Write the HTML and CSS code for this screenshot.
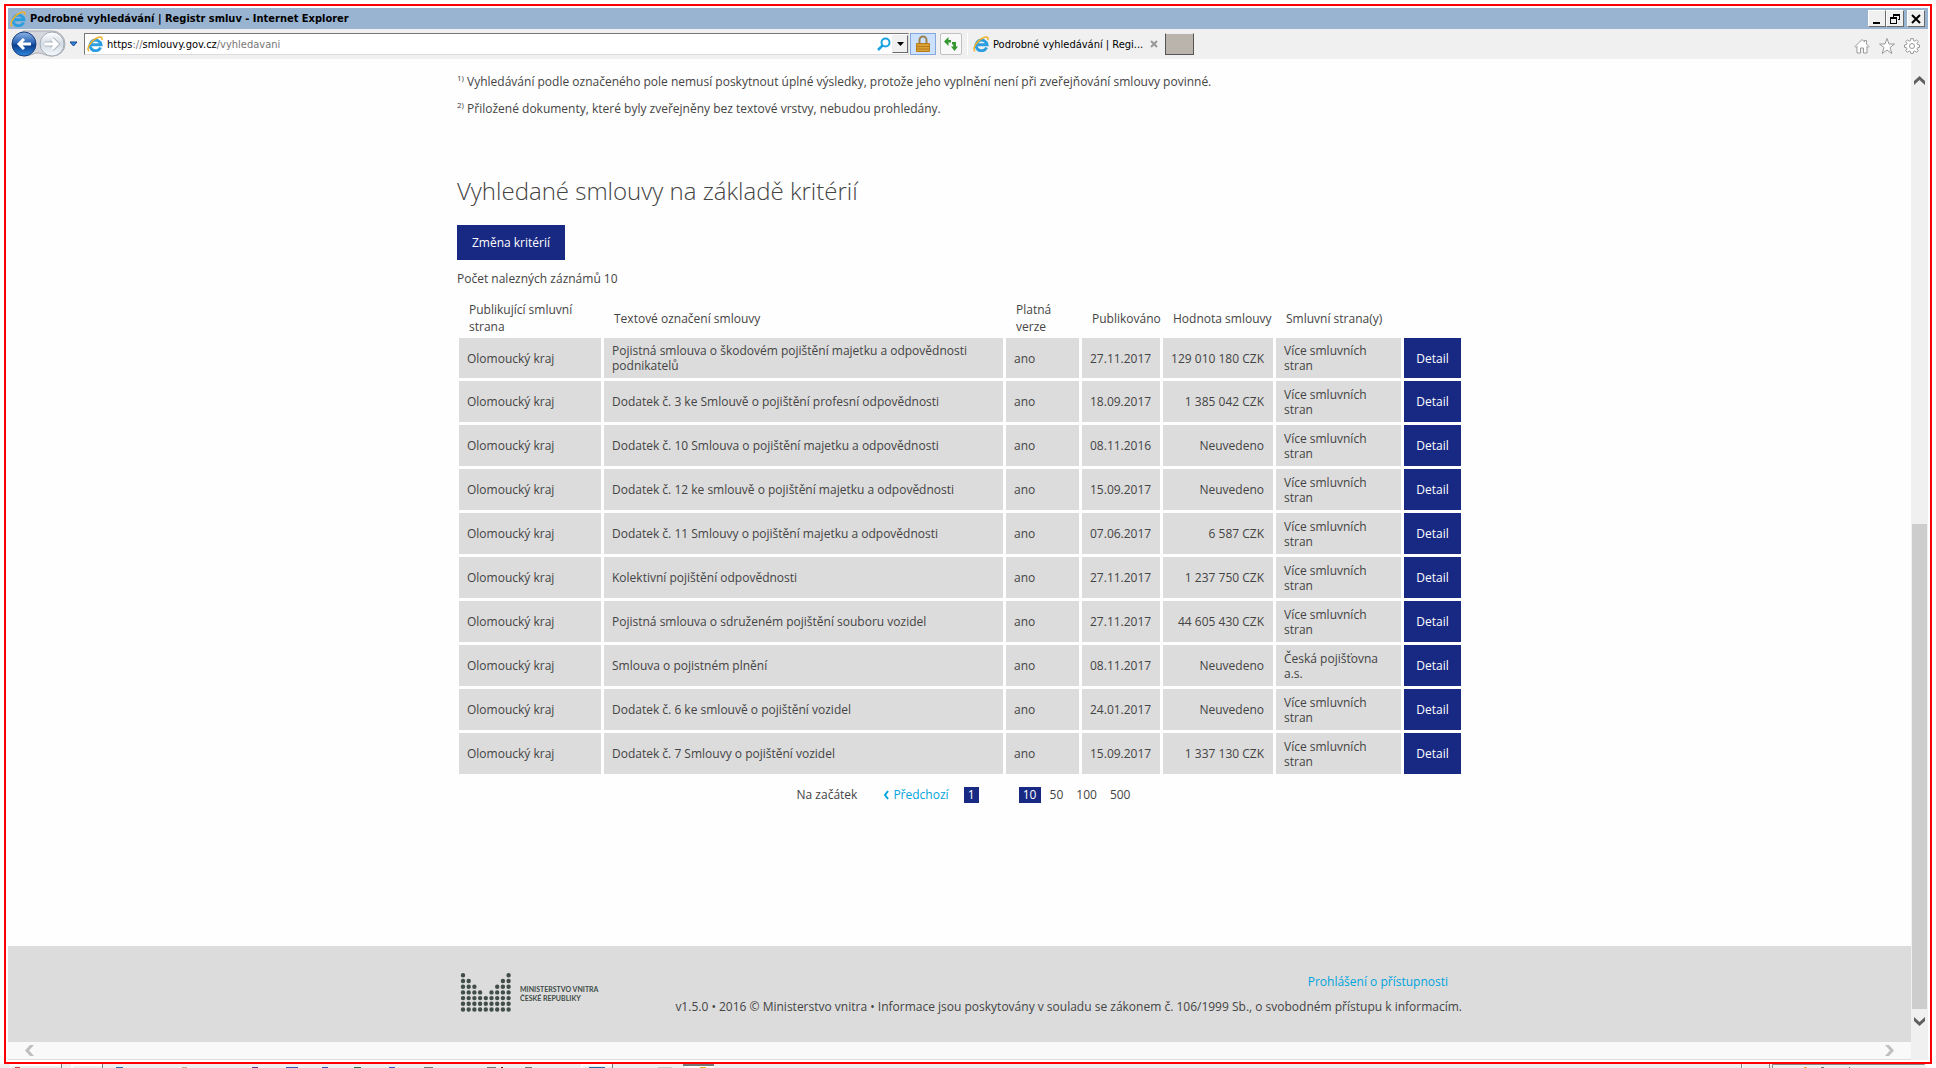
FILE: index.html
```html
<!DOCTYPE html>
<html lang="cs">
<head>
<meta charset="utf-8">
<title>Podrobné vyhledávání | Registr smluv</title>
<link rel="stylesheet" href="styles.css">
</head>
<body>
<svg class="defs" aria-hidden="true">
  <symbol id="ie" viewBox="0 0 16 16">
    <path d="M13.6 11.500A5.500 5.300 0 1 1 14 8.800H4.500" fill="none" stroke="#2d9fe0" stroke-width="3"/>
    <path d="M2.200 15.200C-1 13.500 3 6 8 3 12 .6 16 0 14.800 4" fill="none" stroke="#eeb22c" stroke-width="1.500"/>
  </symbol>
</svg>
<div class="window">
  <header class="titlebar">
    <svg class="ie"><use href="#ie"/></svg>
    <span class="title">Podrobné vyhledávání | Registr smluv - Internet Explorer</span>
    <button class="winbtn" aria-label="Minimalizovat"><svg viewBox="0 0 12 12"><path d="M2 9h7v2H2z"/></svg></button>
    <button class="winbtn" aria-label="Obnovit"><svg viewBox="0 0 12 12"><path d="M4 1h7v6H9V6h1V3H5v1H4zM1 4h7v7H1zm1 2v4h5V6z" fill-rule="evenodd"/></svg></button>
    <button class="winbtn close" aria-label="Zavřít"><svg viewBox="0 0 12 12"><path d="M2 2l8 8M10 2l-8 8" stroke="#000" stroke-width="2"/></svg></button>
  </header>
  <nav class="toolbar">
    <div class="history">
      <svg viewBox="0 0 56 28">
        <defs>
          <linearGradient id="blue" x2="0" y2="1"><stop stop-color="#8fb4e6"/><stop offset=".45" stop-color="#2a63b5"/><stop offset=".55" stop-color="#0d3c8c"/><stop offset="1" stop-color="#2f8be0"/></linearGradient>
          <linearGradient id="pale" x2="0" y2="1"><stop stop-color="#fff"/><stop offset=".5" stop-color="#d3dbe5"/><stop offset="1" stop-color="#f6f9fc"/></linearGradient>
        </defs>
        <path d="M14 1h28a13 13 0 0 1 13 13 12 12 0 0 1-13 12c-7 0-9-3-14-3s-7 3-14 3A13 13 0 0 1 14 1z" fill="#d5d7dc" stroke="#a9acb3"/>
        <circle cx="14" cy="14" r="12" fill="url(#blue)" stroke="#1c3f7c"/>
        <circle cx="42" cy="14" r="12" fill="url(#pale)" stroke="#a5acb6"/>
        <path d="M21 14H9M14 9l-5 5 5 5" fill="none" stroke="#fff" stroke-width="3"/>
        <path d="M35 14h12M42 9l5 5-5 5" fill="none" stroke="#b0b6be" stroke-width="5"/>
        <path d="M35 14h12M42 9l5 5-5 5" fill="none" stroke="#fff" stroke-width="3"/>
      </svg>
      <svg class="drop" viewBox="0 0 9 6"><path d="M1 1h7L4.500 5z" fill="#2f8be0" stroke="#123f86"/></svg>
    </div>
    <div class="address">
      <svg class="ie"><use href="#ie"/></svg>
      <span class="url">https<i>://</i>smlouvy.gov.cz<i>/vyhledavani</i></span>
      <svg class="search" viewBox="0 0 14 14"><circle cx="8.500" cy="5.500" r="4" fill="none" stroke="#1aa3e0" stroke-width="2"/><path d="M5.500 8.500L1 13" stroke="#1aa3e0" stroke-width="2.500"/></svg>
      <button class="menu" aria-label="Nabídka adres"><svg viewBox="0 0 7 4"><path d="M0 0h7L3.500 4z"/></svg></button>
    </div>
    <button class="lock" aria-label="Zabezpečení"><svg viewBox="0 0 16 18"><path d="M4.500 9V5a3.500 3.500 0 0 1 7 0v4" fill="none" stroke="#9a8350" stroke-width="2"/><path d="M1.500 8.500h13v8h-13z" fill="#d9a033" stroke="#b97c1c"/><path d="M2 11.500h12M2 14h12" stroke="#b97c1c"/></svg></button>
    <button class="refresh" aria-label="Obnovit stránku"><svg viewBox="0 0 14 14"><path d="M0 4.500L4.500 0v3H7v2.500H4.500V9zM14 9.500L10.500 14 7 9.500h2.200V7.500H8V5h4v4.500z" fill="#35972f"/></svg></button>
    <div class="tab">
      <svg class="ie"><use href="#ie"/></svg>
      <span>Podrobné vyhledávání | Regi...</span>
      <svg class="x" viewBox="0 0 8 8"><path d="M1 1l6 6M7 1L1 7" stroke="#999" stroke-width="2"/></svg>
    </div>
    <button class="newtab" aria-label="Nová karta"></button>
    <div class="tools">
      <svg viewBox="0 0 16 16"><path d="M1 8.500L8 1.500l2.500 2.500V2.500h2V6L15 8.500l-1 1-1-1V15H9.500v-5h-3v5H3V8.500l-1 1z"/></svg>
      <svg viewBox="0 0 16 16"><path d="M8 .5l2 5.500h5.500L11 9.500l1.800 6L8 12l-4.800 3.500 1.800-6L.5 6H6z"/></svg>
      <svg viewBox="0 0 16 16"><path d="M6.800.6h2.400l.4 2.100 1.200.5 1.800-1.300 1.700 1.700L13 5.400l.5 1.200 2 .4v2.300l-2 .4-.5 1.100 1.300 1.900-1.700 1.600-1.800-1.300-1.200.5-.4 2H6.800l-.4-2-1.200-.5-1.800 1.300-1.700-1.600L3 10.800l-.5-1.100-2-.4V7l2-.4L3 5.400 1.700 3.600l1.700-1.700 1.800 1.300 1.200-.5z"/><circle cx="8" cy="8" r="2.500"/></svg>
    </div>
  </nav>
  <div class="view">
    <div class="pane">
      <main class="page">
        <p class="note"><sup>1)</sup> Vyhledávání podle označeného pole nemusí poskytnout úplné výsledky, protože jeho vyplnění není při zveřejňování smlouvy povinné.</p>
        <p class="note"><sup>2)</sup> Přiložené dokumenty, které byly zveřejněny bez textové vrstvy, nebudou prohledány.</p>
        <h1>Vyhledané smlouvy na základě kritérií</h1>
        <button class="change">Změna kritérií</button>
        <p class="count">Počet nalezných záznámů 10</p>
        <table>
          <colgroup><col class="c1"><col><col class="c3"><col class="c4"><col class="c5"><col class="c6"><col class="c7"></colgroup>
          <thead><tr><th>Publikující smluvní strana</th><th>Textové označení smlouvy</th><th>Platná verze</th><th>Publikováno</th><th class="nowrap">Hodnota smlouvy</th><th>Smluvní strana(y)</th><td></td></tr></thead>
          <tbody>
            <tr><td>Olomoucký kraj</td><td>Pojistná smlouva o škodovém pojištění majetku a odpovědnosti podnikatelů</td><td>ano</td><td>27.11.2017</td><td class="num">129 010 180 CZK</td><td>Více smluvních stran</td><td class="detail"><a href="#">Detail</a></td></tr>
            <tr><td>Olomoucký kraj</td><td>Dodatek č. 3 ke Smlouvě o pojištění profesní odpovědnosti</td><td>ano</td><td>18.09.2017</td><td class="num">1 385 042 CZK</td><td>Více smluvních stran</td><td class="detail"><a href="#">Detail</a></td></tr>
            <tr><td>Olomoucký kraj</td><td>Dodatek č. 10 Smlouva o pojištění majetku a odpovědnosti</td><td>ano</td><td>08.11.2016</td><td class="num">Neuvedeno</td><td>Více smluvních stran</td><td class="detail"><a href="#">Detail</a></td></tr>
            <tr><td>Olomoucký kraj</td><td>Dodatek č. 12 ke smlouvě o pojištění majetku a odpovědnosti</td><td>ano</td><td>15.09.2017</td><td class="num">Neuvedeno</td><td>Více smluvních stran</td><td class="detail"><a href="#">Detail</a></td></tr>
            <tr><td>Olomoucký kraj</td><td>Dodatek č. 11 Smlouvy o pojištění majetku a odpovědnosti</td><td>ano</td><td>07.06.2017</td><td class="num">6 587 CZK</td><td>Více smluvních stran</td><td class="detail"><a href="#">Detail</a></td></tr>
            <tr><td>Olomoucký kraj</td><td>Kolektivní pojištění odpovědnosti</td><td>ano</td><td>27.11.2017</td><td class="num">1 237 750 CZK</td><td>Více smluvních stran</td><td class="detail"><a href="#">Detail</a></td></tr>
            <tr><td>Olomoucký kraj</td><td>Pojistná smlouva o sdruženém pojištění souboru vozidel</td><td>ano</td><td>27.11.2017</td><td class="num">44 605 430 CZK</td><td>Více smluvních stran</td><td class="detail"><a href="#">Detail</a></td></tr>
            <tr><td>Olomoucký kraj</td><td>Smlouva o pojistném plnění</td><td>ano</td><td>08.11.2017</td><td class="num">Neuvedeno</td><td>Česká pojišťovna a.s.</td><td class="detail"><a href="#">Detail</a></td></tr>
            <tr><td>Olomoucký kraj</td><td>Dodatek č. 6 ke smlouvě o pojištění vozidel</td><td>ano</td><td>24.01.2017</td><td class="num">Neuvedeno</td><td>Více smluvních stran</td><td class="detail"><a href="#">Detail</a></td></tr>
            <tr><td>Olomoucký kraj</td><td>Dodatek č. 7 Smlouvy o pojištění vozidel</td><td>ano</td><td>15.09.2017</td><td class="num">1 337 130 CZK</td><td>Více smluvních stran</td><td class="detail"><a href="#">Detail</a></td></tr>
          </tbody>
        </table>
        <div class="pager">
          <a href="#">Na začátek</a>
          <a href="#" class="prev"><svg viewBox="0 0 6 10"><path d="M5 1L2 5l3 4" fill="none" stroke="#00a4dc" stroke-width="2"/></svg>Předchozí</a>
          <span class="current">1</span>
          <div class="sizes"><span class="current wide">10</span><a href="#">50</a><a href="#">100</a><a href="#">500</a></div>
        </div>
      </main>
      <footer class="footer">
        <div class="inner">
          <div class="brand">
            <svg class="logo" viewBox="0 0 52 40"><g fill="none" stroke="#414d48" stroke-width="4.400" stroke-linecap="round" stroke-dasharray="0 5.700"><path d="M3 37.500V3"/><path d="M8.700 37.500V8"/><path d="M14.400 37.500V14"/><path d="M20.100 37.500V20"/><path d="M25.800 37.500V26"/><path d="M31.500 37.500V20"/><path d="M37.200 37.500V14"/><path d="M42.900 37.500V8"/><path d="M48.600 37.500V3"/></g></svg>
            <span>MINISTERSTVO VNITRA<br>ČESKÉ REPUBLIKY</span>
          </div>
          <div class="legal">
            <a href="#">Prohlášení o přístupnosti</a>
            <p>v1.5.0 • 2016 © Ministerstvo vnitra • Informace jsou poskytovány v souladu se zákonem č. 106/1999 Sb., o svobodném přístupu k informacím.</p>
          </div>
        </div>
      </footer>
      <div class="hscroll">
        <svg viewBox="0 0 9 11"><path d="M9 0H5L0 5.500 5 11h4L4 5.500z"/></svg>
        <svg viewBox="0 0 9 11"><path d="M0 0h4l5 5.500L4 11H0l5-5.500z"/></svg>
      </div>
    </div>
    <div class="vscroll">
      <svg viewBox="0 0 11 9"><path d="M0 9V5l5.500-5L11 5v4L5.500 4z"/></svg>
      <div class="track"><div class="thumb"></div></div>
      <svg viewBox="0 0 11 9"><path d="M0 0v4l5.500 5L11 4V0L5.500 5z"/></svg>
    </div>
  </div>
</div>
<div class="taskbar">
  <svg viewBox="0 0 1936 4" preserveAspectRatio="xMinYMin slice">
    <path d="M11 4V1h51M72 4V1h31M582 4V1h31" fill="none" stroke="#fff" stroke-width="2"/>
    <path d="M61.500 0v4M102.500 0v4M612.500 0v4" stroke="#777"/>
    <path d="M683 0h31v2h-31z" fill="#777"/><path d="M685 2h29v2h-29z" fill="#fff"/>
    <path d="M15 3h5v1h-5z" fill="#c4423b"/><path d="M116 3h7v1h-7zM589 3h16v1h-16z" fill="#236ca5"/>
    <path d="M182 3h5v1h-5z" fill="#c9ad83"/><path d="M252 3h6v1h-6z" fill="#6c2f8c"/>
    <path d="M286 3h12v1h-12zM322 3h6v1h-6zM389 3h6v1h-6z" fill="#3558b8"/><path d="M354 3h7v1h-7z" fill="#217346"/>
    <path d="M424 3h9v1h-9zM487 3h9v1h-9zM525 3h7v1h-7z" fill="#777"/><path d="M501 3h2v1h-2z" fill="#800"/>
    <path d="M658 3h14v1h-14z" fill="#ccc"/><path d="M700 3h6v1h-6z" fill="#e5b622"/>
    <path d="M1741.500 0v4M1769.500 0v4M1772.500 4V.5h152" fill="none" stroke="#888"/>
    <path d="M1742 0h1v4h-1zM1926 0h10v4h-10z" fill="#fff"/>
    <path d="M1804 3h3v1h-3z" fill="#f0a850"/><path d="M1821 3h3v1h-3zM1849 3h1v1h-1z" fill="#777"/>
  </svg>
</div>
</body>
</html>
```
FILE: styles.css
```css
* { box-sizing: border-box; }
body {
  margin: 0;
  min-height: 100vh;
  display: flex;
  flex-direction: column;
  background: #fff;
  color: #444;
  font: 12px/18px "Open Sans", "Noto Sans", sans-serif;
}
p, h1 { margin: 0; }
button { padding: 0; border: 0; font: inherit; }
svg { display: block; flex: none; }
a { color: inherit; text-decoration: none; }
.defs { position: absolute; width: 0; height: 0; }
.window {
  flex: 1;
  display: flex;
  flex-direction: column;
  margin: 4px 4px 0;
  padding: 2px;
  border: 2px solid #f00;
}
.ie { width: 16px; height: 16px; }

.titlebar {
  display: flex;
  align-items: center;
  height: 21px;
  padding: 0 3px 0 2px;
  background: #99b4d1;
  color: #000;
  font: bold 11px/16px "DejaVu Sans Condensed", "DejaVu Sans", sans-serif;
}
.title { flex: 1; padding-left: 4px; }
.winbtn {
  display: grid;
  place-items: center;
  width: 18px;
  height: 17px;
  background: #f0f0f0;
  border: 1px solid;
  border-color: #fff #696969 #696969 #fff;
}
.winbtn svg { width: 12px; height: 12px; }
.close { margin-left: 3px; }

.toolbar {
  display: flex;
  align-items: center;
  height: 30px;
  padding-left: 2px;
  background: #f0f0f0;
  color: #000;
  font: 11px/16px "DejaVu Sans Condensed", "DejaVu Sans", sans-serif;
}
.history { display: flex; align-items: center; width: 74px; }
.history svg { width: 56px; height: 28px; }
.history .drop { width: 9px; height: 6px; margin-left: 3px; }
.address {
  display: flex;
  align-items: center;
  width: 825px;
  height: 22px;
  padding-left: 2px;
  background: #fff;
  border: 1px solid;
  border-color: #777 #ddd #ddd #777;
}
.url { flex: 1; padding: 2px 0 0 4px; }
.url i { font-style: normal; color: #777; }
.search { width: 14px; height: 14px; margin-right: 1px; }
.menu {
  display: grid;
  place-items: center;
  width: 16px;
  height: 18px;
  background: #f0f0f0;
  border: 1px solid;
  border-color: #eee #696969 #696969 #eee;
}
.menu svg { width: 7px; height: 4px; }
.lock, .refresh { display: grid; place-items: center; height: 22px; }
.lock { width: 26px; margin: 0 4px 0 1px; background: #cce0ff; border: 1px solid #84a7dc; }
.lock svg { width: 16px; height: 18px; }
.refresh { width: 22px; background: #f8f8f8; border: 1px solid #c0c0c0; border-radius: 2px; }
.refresh svg { width: 14px; height: 14px; }
.tab {
  display: flex;
  align-items: center;
  width: 198px;
  height: 22px;
  margin-left: 5px;
  padding: 0 7px 0 5px;
  border-left: 1px solid #fff;
}
.tab span { flex: 1; padding: 2px 0 0 4px; white-space: nowrap; }
.tab .x { width: 8px; height: 8px; }
.newtab {
  width: 29px;
  height: 22px;
  background: #bab4ac;
  border: 1px solid;
  border-color: #eee #555 #555 #555;
}
.tools { display: flex; gap: 9px; margin: 4px 8px 0 auto; }
.tools svg { width: 16px; height: 16px; fill: #fff; stroke: #999; }

.view { flex: 1; display: flex; background: #fefefe; }
.pane { flex: 1; display: flex; flex-direction: column; }
.page { flex: 1; width: 1005px; max-width: 100%; margin: 0 auto; padding-top: 14px; }
.note { margin-bottom: 9px; }
sup { font-size: 8px; line-height: 0; }
h1 { margin-top: 55px; font-size: 24px; line-height: 36px; font-weight: 300; }
.change {
  display: block;
  width: 108px;
  height: 35px;
  margin: 16px 0 10px;
  background: #172983;
  color: #fff;
}
table {
  width: 1008px;
  margin: 10px -1px 0;
  border-spacing: 3px;
  table-layout: fixed;
  line-height: 15px;
}
.c1 { width: 142px; }
.c3 { width: 73px; }
.c4 { width: 78px; }
.c5 { width: 110px; }
.c6 { width: 125px; }
.c7 { width: 57px; }
th { padding: 0 10px; font-weight: 400; text-align: left; line-height: 17px; }
.nowrap { white-space: nowrap; }
tbody tr + tr { height: 41px; }
tbody td { padding: 5px 8px; background: #dcdcdc; }
tbody .num { padding-right: 9px; padding-left: 0; text-align: right; white-space: nowrap; }
tbody .detail { padding: 0; background: #172983; color: #fff; text-align: center; }
.pager { display: flex; justify-content: center; margin-top: 10px; padding-left: 8px; line-height: 16px; }
.prev { display: flex; align-items: center; margin: 0 15px 0 26px; color: #00a4dc; }
.prev svg { width: 6px; height: 10px; margin-right: 4px; }
.current { width: 15px; background: #172983; color: #fff; text-align: center; }
.sizes { display: flex; gap: 13px; margin-left: 40px; }
.wide { width: 22px; margin-right: -4px; }

.footer { background: #dcdcdc; }
.inner {
  display: flex;
  justify-content: space-between;
  width: 1005px;
  max-width: 100%;
  height: 96px;
  margin: 0 auto;
  padding: 26px 0 0 3px;
}
.brand { display: flex; gap: 8px; color: #414d48; font: bold 7px/9px Lato, sans-serif; }
.brand span { padding-top: 13px; }
.logo { width: 52px; height: 40px; }
.legal { display: flex; flex-direction: column; align-items: flex-end; gap: 7px; padding-top: 1px; }
.legal a { padding-right: 14px; color: #00a4dc; }

.hscroll {
  display: flex;
  justify-content: space-between;
  align-items: center;
  height: 18px;
  padding: 0 17px;
  background: #f9f9f9;
  border-bottom: 1px solid #ddd;
}
.hscroll svg { width: 9px; height: 11px; fill: #bfbfbf; }
.vscroll {
  display: flex;
  flex-direction: column;
  align-items: center;
  width: 17px;
  padding: 17px 0 34px;
  background: #f0f0f0;
}
.vscroll svg { width: 11px; height: 9px; fill: #606060; }
.track { flex: 1; display: flex; align-items: flex-end; padding-bottom: 8px; }
.thumb { width: 15px; height: calc(52% + 5px); background: #cdcdcd; }
.taskbar { height: 4px; overflow: hidden; background: #f0f0f0; }
.taskbar svg { width: 1936px; height: 4px; }
```
